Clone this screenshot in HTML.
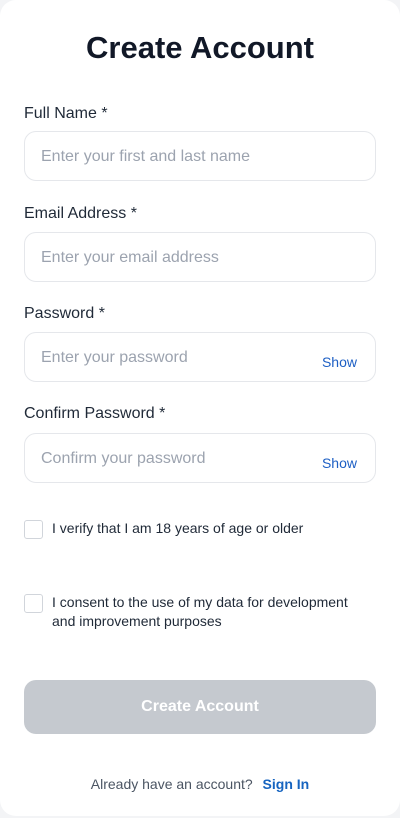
<!DOCTYPE html>
<html><head><style>
body{margin:0;background:#f3f4f6;font-family:"Liberation Sans",sans-serif;}
.card{position:absolute;left:0;top:0;width:400px;height:816px;background:#fff;border-radius:16px;}
.t{position:absolute;left:0;width:400px;text-align:center;top:30px;font-size:31px;font-weight:bold;color:#111827;}
.l{position:absolute;left:24px;font-size:16px;color:#1f2937;}
.i{position:absolute;left:24px;width:350px;height:48px;border:1px solid #e5e7eb;border-radius:12px;}
.i span{position:absolute;left:16px;top:16px;font-size:16px;color:#9ca3af;}
.i b{position:absolute;right:18px;top:21px;font-size:14px;font-weight:normal;color:#1d5fc4;}
.cb{position:absolute;left:24px;width:17px;height:17px;border:1.5px solid #d1d5db;border-radius:3px;}
.ct{position:absolute;left:52px;font-size:14px;color:#1f2937;line-height:19px;}
.btn{position:absolute;left:24px;top:680px;width:352px;height:54px;background:#c5c9cf;border-radius:12px;color:#fff;font-size:16px;font-weight:bold;text-align:center;line-height:54px;}
.f{position:absolute;top:776px;left:0;width:400px;text-align:center;font-size:14px;color:#4b5563;}
.f b{color:#1664c0;margin-left:6px;}
</style></head><body><div class="card">
<div class="t">Create Account</div>
<div class="l" style="top:105px">Full Name *</div>
<div class="i" style="top:131px"><span>Enter your first and last name</span></div>
<div class="l" style="top:205px">Email Address *</div>
<div class="i" style="top:232px"><span>Enter your email address</span></div>
<div class="l" style="top:305px">Password *</div>
<div class="i" style="top:332px"><span>Enter your password</span><b>Show</b></div>
<div class="l" style="top:405px">Confirm Password *</div>
<div class="i" style="top:433px"><span>Confirm your password</span><b>Show</b></div>
<div class="cb" style="top:520px"></div>
<div class="ct" style="top:519px">I verify that I am 18 years of age or older</div>
<div class="cb" style="top:594px"></div>
<div class="ct" style="top:593px">I consent to the use of my data for development<br>and improvement purposes</div>
<div class="btn">Create Account</div>
<div class="f">Already have an account? <b>Sign In</b></div>
</div></body></html>
